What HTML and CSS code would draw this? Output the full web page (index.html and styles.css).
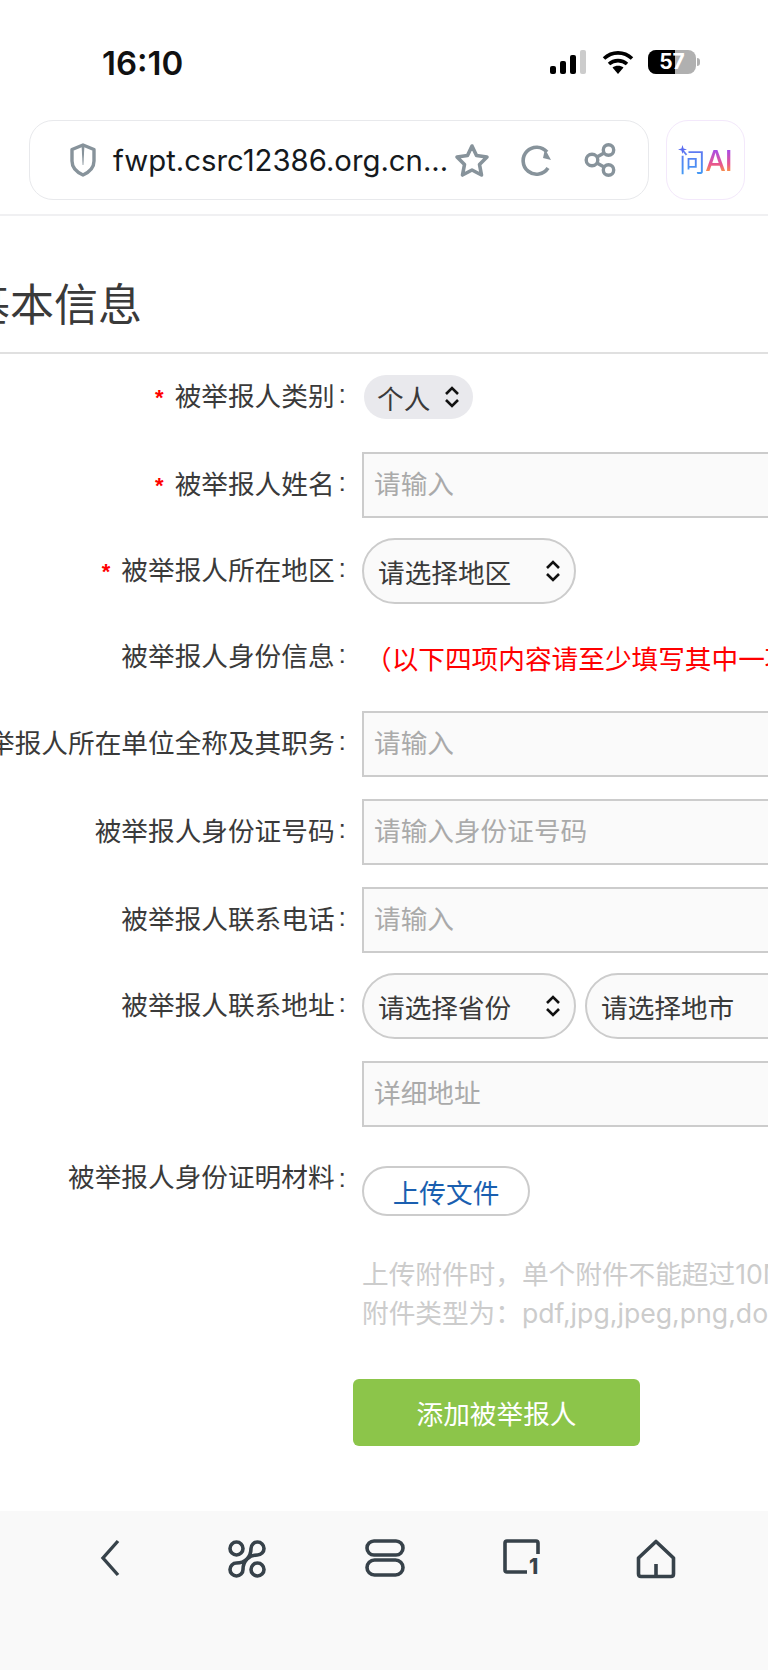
FILE: index.html
```html
<!DOCTYPE html>
<html lang="zh">
<head>
    <meta charset="UTF-8">
    <meta name="viewport" content="width=device-width, initial-scale=1.0">
    <title>基本信息</title>
    <link rel="stylesheet" href="styles.css">
</head>
<body>
    <svg class="defs" width="0" height="0">
        <symbol id="updown" viewBox="0 0 16 22">
            <path d="M2 8 L8 2 L14 8 M2 14 L8 20 L14 14" fill="none" stroke="#111" stroke-width="2.6"/>
        </symbol>
    </svg>

    <!-- phone status bar -->
    <div class="statusbar">
        <span class="time">16:10</span>
        <div class="status-icons">
            <svg class="signal" width="36" height="24" viewBox="0 0 36 24">
                <rect x="0" y="16" width="6" height="8" rx="2" fill="#000"/>
                <rect x="10" y="11" width="6" height="13" rx="2" fill="#000"/>
                <rect x="20" y="5" width="6" height="19" rx="2" fill="#000"/>
                <rect x="30" y="0" width="6" height="24" rx="2" fill="#ccc"/>
            </svg>
            <svg class="wifi" width="32" height="24" viewBox="0 0 32 24">
                <path d="M2 8.5 C10 1 22 1 30 8.5 M7 14 C12 9.5 20 9.5 25 14" fill="none" stroke="#000" stroke-width="3.6"/>
                <path d="M10.5 17.5 C13.5 15 18.5 15 21.5 17.5 L16 24 Z" fill="#000"/>
            </svg>
            <div class="battery"><span class="battery-fill"></span><span class="battery-num">57</span></div>
            <span class="battery-tip"></span>
        </div>
    </div>

    <!-- browser address bar -->
    <div class="browserbar">
        <div class="urlbar">
            <svg class="shield" width="26" height="34" viewBox="0 0 26 34">
                <path d="M13 2 L24 6.5 V18 C24 25 18.5 29.5 13 32 C7.5 29.5 2 25 2 18 V6.5 Z" fill="none" stroke="#87939b" stroke-width="3.4" stroke-linejoin="round"/>
                <path d="M11.6 3 H14.4 L13.4 22 H12.6 Z" fill="#87939b"/>
            </svg>
            <span class="url">fwpt.csrc12386.org.cn...</span>
            <svg class="star" width="36" height="35" viewBox="0 0 36 35">
                <path d="M18 3 L22.5 12.5 L33 14 L25.5 21.5 L27.5 32 L18 27 L8.5 32 L10.5 21.5 L3 14 L13.5 12.5 Z" fill="none" stroke="#87939b" stroke-width="3.6" stroke-linejoin="round"/>
            </svg>
            <svg class="reload" width="32" height="32" viewBox="0 0 32 32">
                <path d="M26 8 A13.5 13.5 0 1 0 27 24" fill="none" stroke="#87939b" stroke-width="3.6"/>
                <path d="M24 5 L30 16 L22 14 Z" fill="#87939b"/>
            </svg>
            <svg class="share" width="32" height="34" viewBox="0 0 32 34">
                <circle cx="8" cy="17" r="5.8" fill="none" stroke="#87939b" stroke-width="3.4"/>
                <circle cx="24.5" cy="7" r="5.2" fill="none" stroke="#87939b" stroke-width="3.4"/>
                <circle cx="24.5" cy="27" r="5.2" fill="none" stroke="#87939b" stroke-width="3.4"/>
                <path d="M13 14 L20 10 M13 20 L20 24" stroke="#87939b" stroke-width="3.4"/>
            </svg>
        </div>
        <div class="aibtn">
            <span class="ai-wen">问</span><span class="ai-latin">AI</span>
            <svg class="spark" width="9" height="9" viewBox="0 0 12 12">
                <path d="M6 0 L7.4 4.6 L12 6 L7.4 7.4 L6 12 L4.6 7.4 L0 6 L4.6 4.6 Z" fill="#5a6cf0"/>
            </svg>
        </div>
    </div>

    <div class="content">
        <h2 class="section-title">基本信息</h2>

        <form class="form">
            <div class="row row-type">
                <label class="label"><em>*</em><span>被举报人类别</span><i>:</i></label>
                <div class="field">
                    <div class="select select-small">个人<svg width="16" height="22"><use href="#updown"/></svg></div>
                </div>
            </div>
            <div class="row row-tight">
                <label class="label"><em>*</em><span>被举报人姓名</span><i>:</i></label>
                <div class="field"><input class="input" type="text" placeholder="请输入"></div>
            </div>
            <div class="row">
                <label class="label"><em>*</em><span>被举报人所在地区</span><i>:</i></label>
                <div class="field">
                    <div class="select">请选择地区<svg width="16" height="22"><use href="#updown"/></svg></div>
                </div>
            </div>
            <div class="row row-notice">
                <label class="label"><span>被举报人身份信息</span><i>:</i></label>
                <div class="field"><span class="notice">&#xFF08;以下四项内容请至少填写其中一项&#xFF09;</span></div>
            </div>
            <div class="row">
                <label class="label"><span>被举报人所在单位全称及其职务</span><i>:</i></label>
                <div class="field"><input class="input" type="text" placeholder="请输入"></div>
            </div>
            <div class="row">
                <label class="label"><span>被举报人身份证号码</span><i>:</i></label>
                <div class="field"><input class="input" type="text" placeholder="请输入身份证号码"></div>
            </div>
            <div class="row row-tight">
                <label class="label"><span>被举报人联系电话</span><i>:</i></label>
                <div class="field"><input class="input" type="text" placeholder="请输入"></div>
            </div>
            <div class="row">
                <label class="label"><span>被举报人联系地址</span><i>:</i></label>
                <div class="field">
                    <div class="select">请选择省份<svg width="16" height="22"><use href="#updown"/></svg></div>
                    <div class="select">请选择地市<svg width="16" height="22"><use href="#updown"/></svg></div>
                </div>
            </div>
            <div class="row row-detail">
                <label class="label"></label>
                <div class="field"><input class="input" type="text" placeholder="详细地址"></div>
            </div>
            <div class="row row-upload">
                <label class="label"><span>被举报人身份证明材料</span><i>:</i></label>
                <div class="field"><button class="upload" type="button">上传文件</button></div>
            </div>
            <div class="row row-help">
                <label class="label"></label>
                <div class="help">上传附件时&#xFF0C;单个附件不能超过10MB<br>附件类型为&#xFF1A;pdf,jpg,jpeg,png,doc,docx</div>
            </div>
            <button class="submit" type="button">添加被举报人</button>
        </form>
    </div>

    <!-- browser bottom toolbar -->
    <div class="toolbar">
        <svg class="tool-back" width="20" height="38" viewBox="0 0 20 38">
            <path d="M18 2 L3 19 L18 36" fill="none" stroke="#37424a" stroke-width="3.4"/>
        </svg>
        <svg class="tool-cmd" width="40" height="40" viewBox="0 0 40 40">
            <g fill="none" stroke="#37424a" stroke-width="3.6">
                <circle cx="9.5" cy="9.5" r="6.5"/>
                <circle cx="30.5" cy="30.5" r="6.5"/>
                <path d="M24 9.5 A6.5 6.5 0 1 1 30.5 16 C22 16 16 22 16 30.5 A6.5 6.5 0 1 1 9.5 24 C18 24 24 18 24 9.5 Z"/>
            </g>
        </svg>
        <svg class="tool-pages" width="40" height="38" viewBox="0 0 40 38">
            <g fill="none" stroke="#37424a" stroke-width="3.6">
                <rect x="2" y="2" width="36" height="14" rx="7"/>
                <rect x="2" y="21" width="36" height="15" rx="7.5"/>
            </g>
        </svg>
        <svg class="tool-tabs" width="38" height="36" viewBox="0 0 38 36">
            <path d="M35 15 V4 Q35 2 33 2 H4 Q2 2 2 4 V31 Q2 33 4 33 H24" fill="none" stroke="#37424a" stroke-width="3.6"/>
            <text x="26" y="35" class="tabs-num">1</text>
        </svg>
        <svg class="tool-home" width="40" height="40" viewBox="0 0 40 40">
            <path d="M20 2.5 L37.5 19 V35 Q37.5 37.5 35 37.5 H5 Q2.5 37.5 2.5 35 V19 Z M20 25 V37" fill="none" stroke="#37424a" stroke-width="3.6" stroke-linejoin="round"/>
        </svg>
    </div>
</body>
</html>
```

FILE: styles.css
```css
* { box-sizing: border-box; }
html, body { margin: 0; padding: 0; }
body { width: 768px; height: 1670px; overflow: hidden; background: #fff; display: flex; flex-direction: column; font-family: "Liberation Sans", "Noto Sans CJK SC", sans-serif; color: #3a3a3a; }
.defs { position: absolute; }

/* status bar */
.statusbar { height: 120px; flex: none; display: flex; justify-content: space-between; padding: 43px 68px 0 102px; }
.time { font-family: Inter, sans-serif; font-weight: 600; font-size: 33px; line-height: 40px; color: #111; }
.status-icons { display: flex; align-items: flex-start; padding-top: 7px; }
.signal { margin-right: 16px; }
.wifi { margin-right: 14px; }
.battery { position: relative; width: 48px; height: 24px; border-radius: 8px; background: #b0b0b0; overflow: hidden; }
.battery-fill { position: absolute; left: 0; top: 0; bottom: 0; width: 27px; background: #000; }
.battery-num { position: absolute; left: 0; right: 0; top: 0; text-align: center; font-family: Inter, sans-serif; font-weight: 700; font-size: 21px; line-height: 24px; color: #fff; }
.battery-tip { width: 3px; height: 8px; margin: 8px 0 0 1px; border-radius: 0 3px 3px 0; background: #b0b0b0; }

/* address bar */
.browserbar { height: 96px; flex: none; display: flex; gap: 17px; padding: 0 0 0 29px; border-bottom: 2px solid #f0f0f2; }
.urlbar { width: 620px; height: 80px; display: flex; align-items: center; padding-left: 40px; border: 1.5px solid #e8e9ec; border-radius: 24px; }
.url { width: 344px; margin-left: 17px; font-family: Inter, sans-serif; font-size: 29.3px; color: #15191d; white-space: nowrap; }
.star { margin-left: -3px; }
.reload { margin-left: 31px; }
.share { margin-left: 31px; }
.aibtn { position: relative; width: 79px; height: 80px; display: flex; align-items: center; justify-content: center; border: 1.5px solid #f3e8fb; border-radius: 22px; font-size: 26px; }
.spark { position: absolute; left: 11px; top: 24px; }
.ai-wen { background: linear-gradient(180deg, #6a6cf0, #3da0f5); -webkit-background-clip: text; background-clip: text; color: transparent; }
.ai-latin { font-family: Inter, sans-serif; font-weight: 500; font-size: 29px; letter-spacing: -1px; background: linear-gradient(180deg, #a64be8 20%, #e8558f 60%, #fa9a3c 85%); -webkit-background-clip: text; background-clip: text; color: transparent; }

/* form page */
.content { flex: 1; overflow: hidden; }
.section-title { margin: 0 0 21px -34px; height: 138px; padding-top: 62px; border-bottom: 2px solid #e0e0e0; font-size: 44px; line-height: 56px; font-weight: 400; color: #3a3a3a; }
.form { display: flex; flex-direction: column; }
.row { display: flex; align-items: center; min-height: 66px; margin-bottom: 22px; }
.row-type { min-height: 44px; margin-bottom: 33px; }
.row-tight { margin-bottom: 20px; }
.row-notice { min-height: 62px; margin-bottom: 23px; }
.row-detail { margin-bottom: 39px; }
.label { width: 346px; flex: none; display: flex; justify-content: flex-end; align-items: center; padding-bottom: 5px; white-space: nowrap; font-size: 26.67px; color: #3a3a3a; }
.label em { margin: 6px 11px 0 0; font-style: normal; font-weight: 700; font-size: 22px; line-height: 30px; color: #f00; }
.label i { margin-left: 4px; font-style: normal; }
.field { margin-left: 16px; display: flex; gap: 9px; white-space: nowrap; }
.input { width: 600px; height: 66px; padding: 0 10px; border: 2px solid #ccc; background: #fafafa; font-family: inherit; font-size: 26.67px; color: #3a3a3a; }
.input::placeholder { color: #aaa; }
.select { width: 214px; height: 66px; padding: 0 13px 0 14px; display: flex; align-items: center; justify-content: space-between; flex: none; border: 2px solid #ccc; border-radius: 33px; background: #fafafa; font-size: 26.67px; color: #3a3a3a; }
.select-small { width: 109px; height: 44px; margin-left: 2px; padding: 0 13px; border: none; border-radius: 22px; background: #e9e9ed; }
.notice { margin-left: 3px; font-size: 26.67px; color: #f00; }
.upload { width: 168px; height: 50px; padding: 0; border: 2px solid #ccc; border-radius: 25px; background: #fff; font-family: inherit; font-size: 26.67px; color: #1a5fb0; }
.row-upload { align-items: flex-start; min-height: 50px; margin-bottom: 39px; }
.row-upload .label { padding-bottom: 0; line-height: 24px; }
.row-help { margin-bottom: 46px; }
.help { margin-left: 16px; font-family: Inter, "Noto Sans CJK SC", sans-serif; font-size: 26.67px; line-height: 39px; color: #ccc; white-space: nowrap; }
.submit { align-self: flex-start; width: 287px; height: 67px; margin-left: 353px; border: none; border-radius: 6px; background: #8cc54a; font-family: inherit; font-size: 26.67px; color: #fff; }

/* bottom toolbar */
.toolbar { height: 159px; flex: none; background: #f9f9f9; display: flex; align-items: flex-start; padding-top: 28px; }
.toolbar svg { flex: none; }
.tool-back { margin-left: 100px; }
.tool-cmd { margin-left: 107px; }
.tool-pages { margin-left: 98px; }
.tool-tabs { margin-left: 98px; }
.tool-home { margin-left: 95px; }
.tabs-num { font-family: Inter, sans-serif; font-weight: 800; font-size: 21px; fill: #37424a; }
```
